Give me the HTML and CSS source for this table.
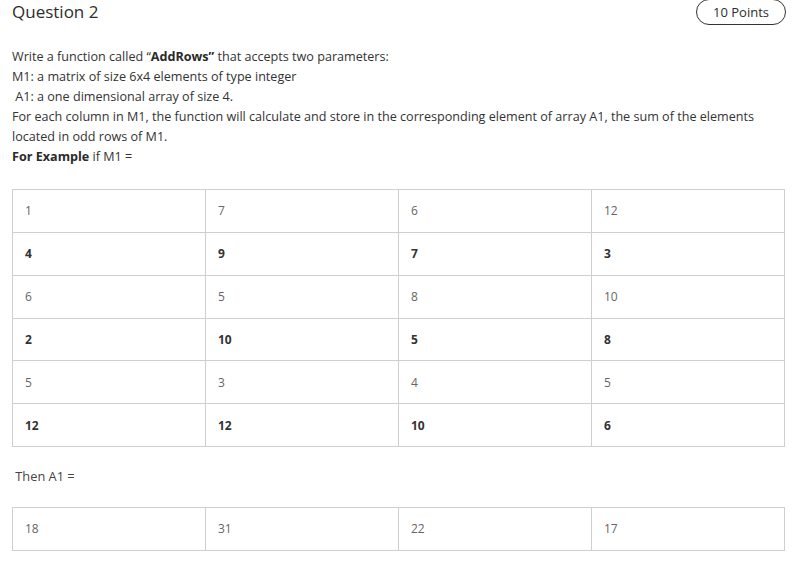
FILE: index.html
```html
<!DOCTYPE html>
<html>
<head>
<meta charset="utf-8">
<link rel="stylesheet" href="styles.css">
</head>
<body>
<div class="page">
  <div class="header">
    <div class="title">Question 2</div>
    <div class="badge">10 Points</div>
  </div>
  <div class="text">
    <div>Write a function called “<b>AddRows”</b> that accepts two parameters:</div>
    <div>M1: a matrix of size 6x4 elements of type integer</div>
    <div>&nbsp;A1: a one dimensional array of size 4.</div>
    <div>For each column in M1, the function will calculate and store in the corresponding element of array A1, the sum of the elements located in odd rows of M1.</div>
    <div><b>For Example</b> if M1 =</div>
  </div>
  <table class="grid first">
    <tr><td>1</td><td>7</td><td>6</td><td>12</td></tr>
    <tr class="bold"><td>4</td><td>9</td><td>7</td><td>3</td></tr>
    <tr><td>6</td><td>5</td><td>8</td><td>10</td></tr>
    <tr class="bold"><td>2</td><td>10</td><td>5</td><td>8</td></tr>
    <tr><td>5</td><td>3</td><td>4</td><td>5</td></tr>
    <tr class="bold"><td>12</td><td>12</td><td>10</td><td>6</td></tr>
  </table>
  <div class="then">&nbsp;Then A1 =</div>
  <table class="grid">
    <tr><td>18</td><td>31</td><td>22</td><td>17</td></tr>
  </table>
</div>
</body>
</html>
```

FILE: styles.css
```css
html, body {
  margin: 0;
  padding: 0;
  background: #fff;
}
body {
  font-family: "Open Sans", "Liberation Sans", sans-serif;
  color: #333;
}
.page {
  padding: 0 16px 0 12px;
}
.header {
  display: flex;
  justify-content: space-between;
  align-items: flex-start;
  height: 25px;
}
.title {
  font-size: 17px;
  line-height: 24px;
  color: #2d2d2d;
}
.badge {
  box-sizing: border-box;
  height: 26px;
  margin-top: -1px;
  margin-right: -1px;
  padding: 0 16px;
  border: 1px solid #333;
  border-radius: 13px;
  font-size: 13px;
  line-height: 24px;
  color: #2d2d2d;
}
.text {
  margin-top: 22px;
  font-size: 12.6px;
  line-height: 20px;
  color: #333;
}
.text b {
  font-weight: 700;
  color: #2a2a2a;
}
.grid {
  border-collapse: collapse;
  width: 773px;
  table-layout: fixed;
  margin-top: 22px;
}
.grid td {
  border: 1px solid #cfcfcf;
  height: 41.85px;
  padding: 0 0 0 12px;
  font-size: 12px;
  color: #666;
  vertical-align: middle;
}
.grid tr.bold td {
  font-weight: 700;
  color: #333;
}
.then {
  margin-top: 19px;
  font-size: 12.8px;
  line-height: 20px;
  color: #444;
}
.then + .grid {
  margin-top: 21px;
}
```
